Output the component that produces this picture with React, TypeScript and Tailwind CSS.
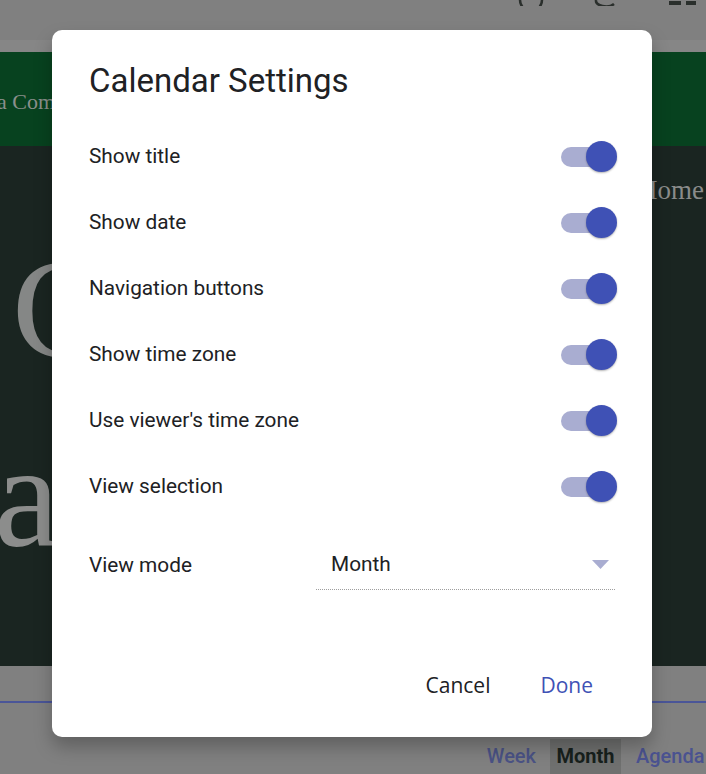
import { useState } from 'react'

const rows = [
  'Show title',
  'Show date',
  'Navigation buttons',
  'Show time zone',
  "Use viewer's time zone",
  'View selection',
]

function Toggle({ on, onClick }: { on: boolean; onClick: () => void }) {
  return (
    <button
      type="button"
      onClick={onClick}
      className="relative flex h-[32px] w-[56px] items-center"
      aria-pressed={on}
    >
      <span className={`h-[20px] w-[46px] rounded-full ${on ? 'bg-[#a9add1]' : 'bg-[#bdbdbd]'}`} />
      <span
        className={`absolute top-[0px] size-[31px] rounded-full shadow-[0_1px_2px_rgba(0,0,0,0.3)] ${
          on ? 'right-0 bg-[#3f51b5]' : 'left-0 bg-[#fafafa]'
        }`}
      />
    </button>
  )
}

export default function App() {
  const [values, setValues] = useState(rows.map(() => true))

  return (
    <div className="relative h-[774px] w-[706px] overflow-hidden bg-[#808080] font-['Liberation_Serif',serif]">
      {/* page behind the overlay */}
      <div className="flex h-[40px] items-start justify-end pr-[8px]">
        <svg width="26" height="6" viewBox="0 0 26 6" className="mr-[50px]">
          <path d="M2 0 A11 11 0 0 0 24 0" fill="none" stroke="#2a2f2c" strokeWidth="2.5" />
        </svg>
        <svg width="22" height="6" viewBox="0 0 22 6" className="mr-[52px]">
          <path d="M2 0 A10 6 0 0 0 20 4" fill="none" stroke="#2a2f2c" strokeWidth="2.5" />
        </svg>
        <svg width="30" height="6" viewBox="0 0 30 6">
          <rect x="1" y="1" width="12" height="4" fill="#2a2f2c" />
          <rect x="18" y="1" width="10" height="4" fill="#2a2f2c" />
        </svg>
      </div>
      <div className="h-[12px] bg-[#868686]" />
      <div className="flex h-[94px] items-center bg-[#07421f]">
        <span className="-ml-[3px] mt-[4px] text-[22px] text-[#8a8f8c]">a Company</span>
      </div>
      <div className="flex h-[520px] flex-col overflow-hidden bg-[#1a2521]">
        <div className="flex justify-end pr-[2px] pt-[28px] text-[27px] leading-[32px] text-[#8a8c8b]">
          Home
        </div>
        <div className="pl-[12px] text-[142px] leading-[190px] text-[#858786]">
          <div className="mt-[8px]">C</div>
        </div>
        <div className="-ml-[6px] -mt-[3px] text-[148px] leading-[190px] text-[#8c8d8c]">a</div>
      </div>
      <div className="h-[35px]" />
      <div className="h-[2px] bg-[#4a5598]" />
      <div className="h-[36px]" />
      <div className="flex h-[37px] items-center justify-end overflow-hidden font-['Roboto',sans-serif] text-[20px]">
        <span className="mb-[4px] pr-[14px] font-medium text-[#4a5285]">Week</span>
        <span className="flex h-[37px] w-[71px] shrink-0 items-center justify-center bg-[#6f706f] pb-[4px] font-bold text-[#17201c]">
          Month
        </span>
        <span className="mb-[4px] w-[85px] shrink-0 pl-[15px] font-medium whitespace-nowrap text-[#4a5290]">Agenda</span>
      </div>

      {/* dialog */}
      <div className="absolute left-[52px] top-[30px] flex h-[707px] w-[600px] flex-col rounded-[10px] bg-white px-[37px] pt-[31px] pb-[31px] font-['Roboto',sans-serif] text-[#202124] shadow-[0_10px_18px_rgba(0,0,0,0.25)]">
        <h1 className="text-[33px] leading-[40px] font-normal">Calendar Settings</h1>
        <div className="mt-[23px] flex flex-col">
          {rows.map((label, i) => (
            <div key={label} className="flex h-[66px] items-center justify-between">
              <span className="text-[20.8px]">{label}</span>
              <div className="-mr-[2px] -mt-[1px]">
                <Toggle
                  on={values[i]}
                  onClick={() => setValues(v => v.map((x, j) => (j === i ? !x : x)))}
                />
              </div>
            </div>
          ))}
        </div>
        <div className="mt-[13px] flex h-[66px] items-center">
          <span className="w-[227px] text-[20.8px]">View mode</span>
          <div className="-mt-[2px] flex h-[50px] flex-1 items-center justify-between border-b border-dotted border-[#9e9e9e] pl-[15px] pr-[6px]">
            <span className="text-[20.8px]">Month</span>
            <svg width="17" height="9" viewBox="0 0 17 9">
              <path d="M0 0 H17 L8.5 9 Z" fill="#a9add1" />
            </svg>
          </div>
        </div>
        <div className="mt-auto flex justify-end gap-[18px] pr-[6px] font-['Open_Sans',sans-serif] text-[21px]">
          <button type="button" className="h-[40px] px-[16px] text-[#202124]">Cancel</button>
          <button type="button" className="h-[40px] px-[16px] text-[#3f51b5]">Done</button>
        </div>
      </div>
    </div>
  )
}
